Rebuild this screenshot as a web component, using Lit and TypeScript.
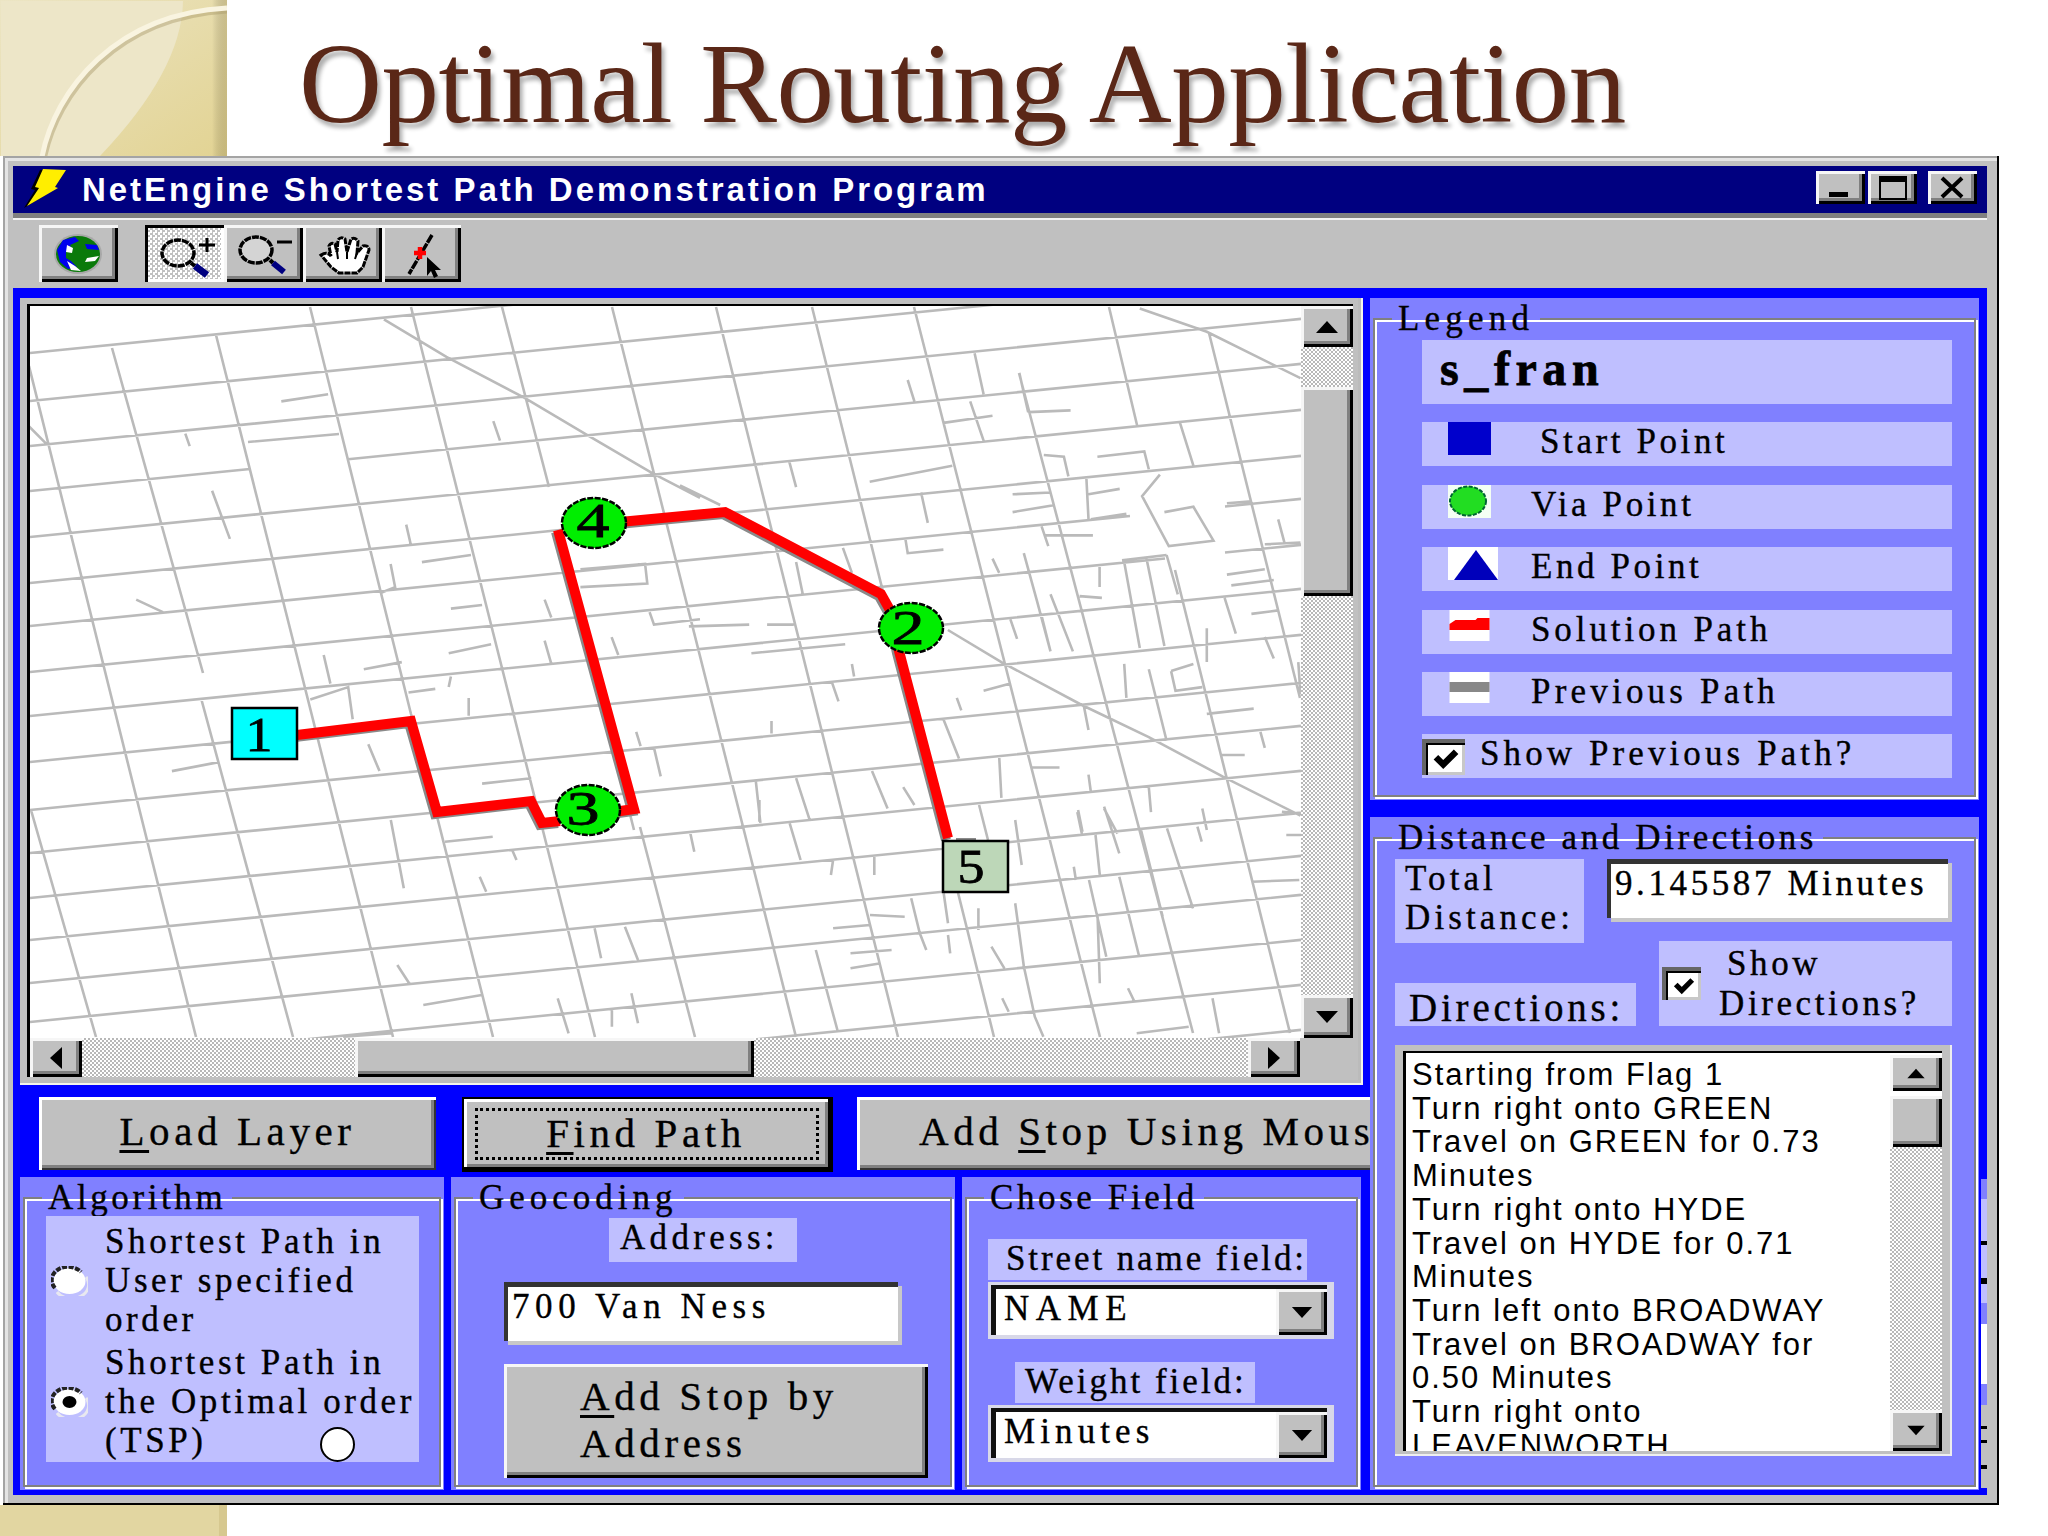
import { LitElement, html, css, svg } from "lit";
import { customElement } from "lit/decorators.js";

const z3 = (x: number, y: number) => [x / 2.24, 280 + y / 2.8];
const z4 = (x: number, y: number) => [680 + x / 2.24, 280 + y / 2.8];
const z9 = (x: number, y: number) => [20 + x / 2.306, 800 + y / 3];
const z10 = (x: number, y: number) => [690 + x / 2.306, 800 + y / 3];

const poly = (p: number[], f: (x: number, y: number) => number[]) => {
  let d = "";
  for (let i = 0; i < p.length; i += 2) {
    const [x, y] = f(p[i], p[i + 1]);
    d += `${i ? "L" : "M"}${x.toFixed(1)} ${y.toFixed(1)}`;
  }
  return d;
};

const MAIN_V = [
  [31, 810, 96, 1037], [29, 366, 196, 1037], [112, 348, 203, 673], [201, 698, 293, 1037],
  [216, 335, 393, 1037], [310, 307, 411, 714], [411, 714, 493, 1037], [411, 307, 595, 1037],
  [502, 307, 549, 487], [558, 530, 634, 830], [640, 827, 695, 1037], [612, 307, 796, 1037],
  [716, 307, 898, 1037], [812, 307, 994, 1037], [914, 307, 1100, 1037], [1019, 373, 1193, 1033],
  [1109, 307, 1137, 425], [1175, 570, 1290, 1033], [1209, 333, 1300, 698],
  [248, 442, 339, 434],
];
const H0 = [353, 401, 446, 491, 537, 583, 626, 672, 716, 762, 810, 853, 898, 940, 983, 1022, 1067, 1112, 1157];
const GAPS: Record<number, number[][]> = { 491: [[250, 348]], 626: [[1130, 1225]], 672: [[1165, 1225]] };

const EX3 = [
  [630, 340, 735, 320], [415, 430, 425, 465], [1105, 395, 1120, 450], [475, 590, 515, 725], [910, 685, 920, 740],
  [945, 790, 1055, 770], [875, 795, 885, 860, 855, 875], [305, 895, 365, 930], [1010, 920, 1080, 910],
  [1220, 895, 1235, 945], [1370, 1000, 1385, 1050], [1220, 1010, 1235, 1075], [725, 1050, 740, 1130],
  [815, 1090, 900, 1070], [1005, 1045, 1100, 1020], [1010, 1110, 1005, 1140], [695, 1175, 780, 1140, 790, 1230],
  [915, 1155, 975, 1145], [1050, 1170, 1050, 1220], [825, 1300, 850, 1375], [385, 1375, 490, 1350],
  [1080, 1410, 1190, 1395], [1465, 1310, 1480, 1390], [1425, 1265, 1435, 1305],
  [1300, 810, 1445, 795, 1450, 850, 1300, 860], [1455, 930, 1465, 965, 1568, 950],
  [860, 110, 1000, 215, 1175, 330, 1310, 430, 1460, 540, 1568, 610], [65, 410, 105, 460],
];
const EX4 = [
  [0, 575, 90, 630], [600, 980, 720, 1070, 900, 1190, 1050, 1280, 1215, 1390, 1390, 1500],
  [1030, 80, 1180, 145, 1390, 275],
  [510, 280, 525, 340], [650, 340, 680, 450], [590, 400, 700, 380], [660, 205, 680, 320], [760, 260, 780, 370],
  [780, 370, 875, 365], [245, 510, 260, 580], [425, 565, 610, 520], [540, 595, 555, 680], [745, 600, 830, 595],
  [745, 650, 840, 630], [815, 490, 860, 495, 870, 550], [910, 550, 915, 670], [915, 600, 985, 585], [920, 670, 1000, 655],
  [810, 690, 825, 745], [815, 715, 925, 715], [935, 495, 1040, 480, 1050, 530],
  [1075, 545, 1035, 605, 1095, 745, 1195, 730, 1150, 635, 1085, 650], [1120, 400, 1150, 520],
  [1225, 625, 1280, 620], [1340, 670, 1355, 740], [1310, 740, 1390, 735], [1225, 825, 1310, 810], [1235, 855, 1330, 840],
  [1280, 935, 1340, 925], [1220, 890, 1245, 990], [505, 725, 510, 765, 590, 755], [365, 750, 385, 820], [260, 790, 275, 880],
  [700, 780, 715, 820], [770, 765, 800, 900, 830, 1040], [830, 880, 880, 1040], [940, 800, 940, 860], [895, 885, 945, 890],
  [995, 790, 1030, 1030], [1045, 780, 1085, 1025], [1090, 770, 1115, 880], [990, 785, 1090, 770], [740, 950, 755, 1005],
  [810, 940, 830, 1040], [1180, 975, 1180, 1070], [995, 1075, 1000, 1170], [1050, 1090, 1090, 1290], [1100, 1095, 1110, 1150, 1170, 1140],
  [1100, 1095, 1150, 1075], [1310, 1000, 1330, 1060], [1385, 1070, 1390, 1160], [385, 1075, 390, 1110], [340, 1125, 355, 1180],
  [680, 1150, 740, 1130], [620, 1170, 630, 1205], [205, 1235, 205, 1270], [160, 1045, 370, 1020], [195, 965, 255, 965], [20, 970, 155, 965],
  [905, 1195, 915, 1260], [590, 1230, 625, 1340], [1180, 1215, 1285, 1200], [1300, 1265, 1310, 1310], [1210, 1330, 1265, 1330],
  [715, 1335, 720, 1450], [785, 1365, 850, 1365], [915, 1385, 920, 1430], [1050, 1420, 1055, 1490], [170, 1405, 180, 1520],
  [260, 1395, 290, 1510], [430, 1375, 465, 1480], [500, 1420, 525, 1470], [670, 1470, 690, 1568], [890, 1490, 900, 1550],
  [950, 1480, 980, 1550], [1170, 1480, 1180, 1540],
];
const EX9 = [
  [855, 60, 885, 265], [1135, 150, 1145, 180], [1060, 230, 1075, 275], [870, 495, 900, 555], [930, 615, 1065, 585],
  [1325, 385, 1340, 475], [1395, 380, 1425, 480], [1240, 595, 1265, 700], [1410, 580, 1425, 670], [1365, 630, 1365, 680],
  [1545, 95, 1555, 155], [980, 125, 1090, 110], [745, 710, 860, 700],
];
const EX10 = [
  [160, 0, 160, 65], [230, 70, 255, 180], [330, 180, 325, 225], [425, 165, 425, 225], [510, 295, 530, 400, 545, 450],
  [585, 280, 595, 370], [595, 405, 600, 460], [665, 325, 665, 390], [750, 310, 770, 500, 795, 650, 815, 710], [750, 60, 765, 195],
  [895, 30, 905, 95], [955, 20, 990, 160], [935, 105, 945, 225], [885, 200, 890, 240], [920, 240, 960, 470], [990, 230, 1035, 465],
  [940, 350, 945, 550], [1040, 90, 1090, 350], [1100, 85, 1160, 325], [1170, 80, 1180, 125], [330, 385, 415, 375], [415, 345, 495, 350],
  [370, 460, 465, 450], [370, 505, 440, 490], [290, 450, 340, 690], [695, 440, 725, 505], [1010, 565, 1025, 605], [720, 595, 735, 635],
  [1205, 595, 1220, 700], [1030, 700, 1150, 680], [1295, 245, 1405, 240], [1375, 105, 1410, 105], [1365, 35, 1410, 40],
];

function streets() {
  let d = "";
  for (const v of MAIN_V) d += `M${v[0]} ${v[1]}L${v[2]} ${v[3]}`;
  const at = (y0: number, x: number) => (y0 - 0.1 * (x - 30)).toFixed(1);
  for (const y0 of H0) {
    let start = 30;
    for (const g of GAPS[y0] ?? []) {
      d += `M${start} ${at(y0, start)}L${g[0]} ${at(y0, g[0])}`;
      start = g[1];
    }
    d += `M${start} ${at(y0, start)}L1301 ${at(y0, 1301)}`;
  }
  for (const p of EX3) d += poly(p, z3);
  for (const p of EX4) d += poly(p, z4);
  for (const p of EX9) d += poly(p, z9);
  for (const p of EX10) d += poly(p, z10);
  return d;
}
const STREETS = streets();
const ROUTE =
  "M297 735L411 721L437 812L531 801L542 823L560 821M600 814L634 809L558 530M620 522L725 512L881 594L890 610L899 651L948 838";

const DIRECTIONS = [
  "Starting from Flag 1", "Turn right onto GREEN", "Travel on GREEN for 0.73", "Minutes", "Turn right onto HYDE",
  "Travel on HYDE for 0.71", "Minutes", "Turn left onto BROADWAY", "Travel on BROADWAY for", "0.50 Minutes",
  "Turn right onto", "LEAVENWORTH",
];

const up = html`<svg class="arrow" viewBox="0 0 24 14"><polygon points="12,1 23,13 1,13"/></svg>`;
const down = html`<svg class="arrow" viewBox="0 0 24 14"><polygon points="12,13 23,1 1,1"/></svg>`;
const left = html`<svg class="arrow side" viewBox="0 0 14 24"><polygon points="1,12 13,1 13,23"/></svg>`;
const right = html`<svg class="arrow side" viewBox="0 0 14 24"><polygon points="13,12 1,1 1,23"/></svg>`;
const check = html`<svg class="tick" viewBox="0 0 30 24"><path d="M4 10L12 18L26 4" fill="none" stroke="#000" stroke-width="7"/></svg>`;

const radio = (on: boolean) => html`<svg class="radio" viewBox="0 0 37 30">
  <ellipse cx="18.5" cy="15" rx="16" ry="13" fill="#fff"/>
  <path d="M4 22A16 13 0 0 1 30 6" fill="none" stroke="#222" stroke-width="4" stroke-dasharray="5 1.5"/>
  <path d="M6 26A17 14 0 0 0 35 11" fill="none" stroke="#e8e8f0" stroke-width="3"/>
  ${on ? svg`<ellipse cx="18.5" cy="15" rx="7" ry="6"/>` : ""}
</svg>`;

const combo = (value: string, cls: string) => html`<div class="combo">
  <div class="combo-in">
    <span class="combo-text ${cls}">${value}</span>
    <div class="combo-btn bevel">${down}</div>
  </div>
</div>`;

@customElement("app-root")
export class AppRoot extends LitElement {
  static styles = css`
    :host { display: block; width: 2048px; height: 1536px; background: #fff; overflow: hidden; font-family: "Liberation Serif", serif; color: #000; }
    .head { display: flex; height: 156px; }
    .corner { width: 227px; height: 156px; display: block; flex: none; }
    h1 { margin: 0 0 0 72px; padding-top: 9px; height: 147px; font: 400 115px/150px "Liberation Serif", serif; letter-spacing: -0.55px; color: #5a2717; text-shadow: 3px 5px 4px rgba(0,0,0,.32); white-space: nowrap; }
    .foot { height: 31px; width: 227px; background: linear-gradient(to right, #e2d6a1 0 219px, #d6c88f 219px); }

    .window { margin-left: 3px; width: 1996px; height: 1349px; box-sizing: border-box; padding: 10px 10px 8px; border-right: 2px solid #000; border-bottom: 2px solid #000; background: #c0c0c0; box-shadow: inset 2px 2px 0 #a4a4a4, inset 5px 5px 0 #e4e4e4; display: flex; flex-direction: column; }
    .titlebar { height: 47px; flex: none; background: #000080; display: flex; align-items: center; padding-right: 10px; }
    .bolt { width: 60px; height: 47px; flex: none; }
    .title-text { margin-left: 9px; font: 700 33px/47px "Liberation Sans", sans-serif; letter-spacing: 2.95px; color: #fff; flex: 1; white-space: nowrap; }
    .winbtn { width: 49px; height: 33px; margin-top: -5px; display: flex; flex: none; }
    .winbtn svg { width: 100%; height: 100%; }
    .winbtn.m { margin-left: 3px; }
    .winbtn.c { margin-left: 11px; }
    .sep { height: 7px; flex: none; background: linear-gradient(to bottom, #808080 0 5px, #f4f4f4 5px); }
    .toolbar { height: 68px; flex: none; display: flex; padding: 5px 0 0 26px; box-sizing: border-box; }
    .tool { width: 79px; height: 57px; flex: none; box-sizing: border-box; }
    .tool svg { display: block; width: 79px; height: 57px; }
    .tool.first { margin-right: 27px; }
    .pressed { background: repeating-conic-gradient(#c0c0c0 0 25%, #fff 0 50%) 0 0/5px 5px; box-shadow: inset 3px 3px 0 #000, inset -3px -3px 0 #fff; }
    .bevel { background: #c0c0c0; box-shadow: inset 3px 3px 0 #f6f6f6, inset -3px -3px 0 #000, inset -6px -6px 0 #808080; }
    .bevel2 { background: #c0c0c0; box-shadow: inset 3px 3px 0 #fff, inset -2px -2px 0 #333, inset -5px -5px 0 #808080; }

    .main { flex: 1; min-height: 0; position: relative; background: #0000ff; padding: 10px 7px 5px; display: flex; }
    .col-l { width: 1350px; flex: none; overflow: hidden; display: flex; flex-direction: column; }
    .col-r { width: 609px; flex: none; display: flex; flex-direction: column; gap: 17px; }
    .strip { position: absolute; right: 0; top: 890px; width: 6px; height: 310px; background: linear-gradient(to bottom, #0000ff 0 1px, #8080ff 1px 21px, #bfbfff 21px 63px, #000 63px 67px, #bfbfff 67px 100px, #000 100px 106px, #bfbfff 106px 125px, #8080ff 125px 146px, #fff 146px 206px, #8080ff 206px 227px, #c0c0c0 227px 248px, #000 248px 251px, #c0c0c0 251px 262px, #000 262px 265px, #c0c0c0 265px 287px, #000 287px 291px, #c0c0c0 291px 310px); }

    .frame { width: 1343px; height: 787px; box-sizing: border-box; padding: 6px 10px 8px 7px; background: #c0c0c0; box-shadow: inset -2px -2px 0 #f4f4ec, inset -5px -5px 0 #bbb; flex: none; }
    .frame-in { box-sizing: border-box; width: 1326px; height: 773px; border-top: 2px solid #000; border-left: 3px solid #000; display: grid; grid-template-columns: 1271px 52px; grid-template-rows: 732px 39px; background: #c0c0c0; }
    .map { display: block; width: 1271px; height: 732px; background: #fff; }
    .street { fill: none; stroke: #bababa; stroke-width: 2.6; }
    .route { fill: none; stroke: #ff0000; stroke-width: 10; stroke-linejoin: miter; }
    .route-sh { fill: none; stroke: #8a8a8a; stroke-width: 10; stroke-linejoin: miter; }
    .digit { font: 400 49px "Liberation Serif", serif; fill: #000; text-anchor: middle; stroke: #000; stroke-width: .8; }
    .vs { display: flex; flex-direction: column; }
    .hs { display: flex; }
    .track { background: repeating-conic-gradient(#b8b8b8 0 25%, #fff 0 50%) 0 0/4px 4px; }
    .sbtn { display: flex; align-items: center; justify-content: center; flex: none; box-sizing: border-box; }
    .arrow { width: 24px; height: 14px; display: block; }
    .arrow.side { width: 14px; height: 24px; }
    .vs .b-up { height: 41px; } .vs .t1 { height: 40px; } .vs .thumb { height: 209px; } .vs .t2 { height: 399px; } .vs .b-dn { height: 43px; }
    .hs .b-l { width: 52px; } .hs .t1 { width: 273px; } .hs .thumb { width: 399px; } .hs .t2 { width: 494px; } .hs .b-r { width: 52px; }

    .btns { display: flex; flex: none; margin-top: 12px; height: 75px; padding-left: 19px; }
    .btn { flex: none; height: 73px; box-sizing: border-box; font: 400 41px/68px "Liberation Serif", serif; letter-spacing: 4.6px; -webkit-text-stroke: .35px #000; text-align: center; white-space: nowrap; }
    .btn u { text-underline-offset: 5px; text-decoration-thickness: 3px; }
    .b-load { width: 397px; }
    .b-find { width: 371px; height: 75px; margin-left: 26px; background: #c0c0c0; border-style: solid; border-color: #000; border-width: 2px 5px 5px 2px; box-shadow: inset 3px 3px 0 #fff, inset -3px -3px 0 #808080; position: relative; }
    .b-find::after { content: ""; position: absolute; inset: 9px 9px 7px 11px; border: 3px dotted #000; }
    .b-add { width: 602px; margin-left: 24px; }

    .bottom { display: flex; flex: none; margin-top: 5px; gap: 7px; }
    .panel { background: #8080ff; box-sizing: border-box; padding: 3px 3px 3px; display: flex; flex: none; }
    fieldset { margin: 0; padding: 0; flex: 1; min-width: 0; border: 2px solid #808080; box-shadow: inset 2px 2px 0 #fff, 2px 2px 0 #fff; display: flex; flex-direction: column; }
    legend { margin-left: 17px; padding: 0 6px; height: 36px; }
    .t { font: 400 35px/36px "Liberation Serif", serif; letter-spacing: 3.6px; -webkit-text-stroke: .35px #000; white-space: nowrap; }
    .row { background: #bfbfff; }
    legend.wide { letter-spacing: 5.2px; }
    legend.wider { letter-spacing: 5px; }

    .p-alg { width: 424px; height: 313px; }
    .p-geo { width: 504px; height: 313px; }
    .p-cho { width: 399px; height: 313px; }
    .alg-in { margin: 0 0 0 21px; width: 373px; height: 246px; box-sizing: border-box; padding: 6px 0 0 5px; position: relative; display: flex; flex-direction: column; gap: 4px; }
    .alg-opt { display: grid; grid-template-columns: 54px 1fr; align-items: center; line-height: 39px; }
    .radio { width: 37px; height: 30px; display: block; }
    .oval { position: absolute; left: 274px; top: 211px; width: 35px; height: 35px; box-sizing: border-box; border: 2px solid #000; border-radius: 50%; background: #fff; }
    .addr { margin: 2px 0 0 153px; width: 188px; height: 44px; box-sizing: border-box; padding-left: 11px; line-height: 40px; letter-spacing: 4.3px; }
    .input { box-sizing: border-box; background: #fff; border-top: 5px solid #333; border-left: 4px solid #333; box-shadow: 4px 4px 0 #c8c8c8; display: flex; align-items: flex-start; }
    .geo-in { margin: 20px 0 0 48px; width: 394px; height: 59px; padding-left: 4px; line-height: 40px; letter-spacing: 5.6px; }
    .geo-btn { margin: 23px 0 0 48px; width: 424px; height: 114px; box-sizing: border-box; padding: 9px 0 0 76px; font: 400 41px/47px "Liberation Serif", serif; letter-spacing: 4.6px; -webkit-text-stroke: .35px #000; white-space: nowrap; }
    .geo-btn u { text-underline-offset: 5px; text-decoration-thickness: 3px; }
    .lab { box-sizing: border-box; height: 41px; line-height: 40px; }
    .lab-s { margin: 23px 0 0 21px; width: 319px; padding-left: 18px; letter-spacing: 2.9px; }
    .lab-w { margin: 23px 0 0 48px; width: 240px; padding-left: 10px; letter-spacing: 3px; }
    .combo { margin: 2px 0 0 21px; width: 346px; height: 57px; box-sizing: border-box; padding: 3px 7px 4px 3px; background: #d8d8e8; flex: none; }
    .combo-in { height: 100%; box-sizing: border-box; border-top: 4px solid #111; border-left: 5px solid #111; background: #fff; display: flex; }
    .combo-text { flex: 1; font: 400 35px/40px "Liberation Serif", serif; letter-spacing: 3.6px; -webkit-text-stroke: .35px #000; padding-left: 8px; }
    .combo-text.n { letter-spacing: 6.5px; }
    .combo-text.mn { letter-spacing: 5.1px; }
    .combo-btn { width: 51px; display: flex; align-items: center; justify-content: center; flex: none; }
    .combo-btn .arrow { width: 22px; height: 13px; }

    .p-leg { height: 502px; width: 609px; }
    .p-dis { height: 673px; width: 609px; }
    .rows { margin-left: 47px; width: 530px; display: flex; flex-direction: column; gap: 18.4px; padding-top: 3px; }
    .lrow { height: 44px; display: flex; line-height: 40px; }
    .lrow.big { height: 64px; padding-left: 18px; font: 700 48px/58px "Liberation Serif", serif; letter-spacing: 5.6px; -webkit-text-stroke: .8px #000; }
    .ic { margin-left: 26px; width: 43px; height: 33px; flex: none; display: block; }
    .ic.w { width: 50px; }
    .lbl { margin-left: 40px; line-height: 40px; }
    .lrow .lbl.s { margin-left: 49px; }
    .lrow .lbl.e { margin-left: 33px; }
    .lrow .lbl.pv { margin-left: 40px; letter-spacing: 4.2px; }
    .lrow .lbl.so { letter-spacing: 3.9px; }
    .lrow .lbl.p { margin-left: 15px; letter-spacing: 4.1px; }
    .cb { width: 43px; height: 36px; box-sizing: border-box; flex: none; background: #fff; border-top: 4px solid #666; border-left: 4px solid #666; box-shadow: inset 2px 2px 0 #000, inset -3px -3px 0 #c8c8c8; display: flex; align-items: center; justify-content: center; margin-top: 5px; }
    .tick { width: 28px; height: 22px; display: block; }
    .dgrid { margin: 3px 0 0 20px; display: grid; width: 557px; grid-template-columns: 189px 23px 29px 23px 293px; grid-template-rows: 63px 19px 2px 40px 43px; }
    .total { grid-column: 1; grid-row: 1 / 4; padding: 0 0 0 10px; line-height: 39px; letter-spacing: 4.1px; }
    .dist { grid-column: 3 / 6; grid-row: 1; padding-left: 4px; line-height: 40px; margin-right: 4px; margin-bottom: 4px; }
    .show { grid-column: 5; grid-row: 3 / 6; display: flex; position: relative; }
    .show .cb { margin: 26px 0 0 3px; width: 39px; height: 33px; }
    .show .cb .tick { width: 24px; height: 18px; }
    .show-t { line-height: 40px; padding-top: 3px; margin-left: 18px; }
    .show-t span { padding-left: 8px; }
    .dirs { grid-column: 1 / 4; grid-row: 5; font: 400 39px/43px "Liberation Serif", serif; letter-spacing: 3.8px; padding: 3px 0 0 14px; box-sizing: border-box; white-space: nowrap; }
    .list { margin: 19px 0 0 20px; width: 557px; height: 411px; box-sizing: border-box; padding: 6px 10px 5px 8px; background: #c0c0c0; box-shadow: inset -2px -2px 0 #eee; flex: none; }
    .list-in { height: 100%; box-sizing: border-box; border-top: 2px solid #000; border-left: 3px solid #000; display: flex; background: #fff; }
    .list-text { flex: 1; min-width: 0; overflow: hidden; padding: 5px 0 0 6px; font: 400 31px/33.7px "Liberation Sans", sans-serif; letter-spacing: 2px; white-space: nowrap; }
    .list-sb { width: 52px; flex: none; display: flex; flex-direction: column; }
    .list-sb .b-up { height: 36px; margin-top: 2px; } .list-sb .gap { height: 5px; background: #fff; } .list-sb .thumb { height: 51px; } .list-sb .t2 { flex: 1; } .list-sb .b-dn { height: 41px; }
    .list-sb .arrow { width: 20px; height: 11px; }
  `;

  private mapSvg() {
    const oval = (cx: number, cy: number, d: string, dx: number, by: number) => svg`
      <ellipse cx=${cx} cy=${cy} rx="32" ry="25" fill="#00ee00" stroke="#000" stroke-width="2.5" stroke-dasharray="6 1.5"/>
      <text class="digit" x=${dx} y=${by} textLength="33" lengthAdjust="spacingAndGlyphs">${d}</text>`;
    return html`<svg class="map" viewBox="30 306 1271 732">
      <path class="street" d=${STREETS}/>
      <path class="route-sh" d=${ROUTE} transform="translate(-2 2)"/>
      <path class="route" d=${ROUTE}/>
      <rect x="232" y="708" width="65" height="51" fill="#00ffff" stroke="#000" stroke-width="2.5"/>
      <text class="digit" x="259" y="751" textLength="27" lengthAdjust="spacingAndGlyphs">1</text>
      ${oval(594, 523, "4", 593, 537)}
      ${oval(588, 810, "3", 583, 825)}
      ${oval(911, 628, "2", 908, 644)}
      <rect x="956" y="838" width="20" height="4" fill="#8a8a8a"/>
      <rect x="943" y="841" width="65" height="51" fill="#bdd7b8" stroke="#000" stroke-width="2.5"/>
      <text class="digit" x="971" y="883" textLength="27" lengthAdjust="spacingAndGlyphs">5</text>
    </svg>`;
  }

  render() {
    return html`
      <div class="head">
        <svg class="corner" viewBox="0 0 227 156">
          <defs>
            <linearGradient id="cg" x1="0" y1="0" x2="1" y2="1"><stop offset="0" stop-color="#ece5c4"/><stop offset="1" stop-color="#e2d393"/></linearGradient>
            <linearGradient id="ce" x1="0" x2="1"><stop offset="0" stop-color="#000" stop-opacity="0"/><stop offset="1" stop-color="#8a7a40" stop-opacity=".3"/></linearGradient>
          </defs>
          <rect width="227" height="156" fill="url(#cg)"/>
          <path d="M1 1H183Q182 70 100 156H1Z" fill="#ede6c8"/>
          <rect x="212" width="15" height="156" fill="url(#ce)"/>
          <path d="M42 157C55 90 115 14 227 8" fill="none" stroke="#a89a68" stroke-opacity=".45" stroke-width="5" transform="translate(2 3)"/>
          <path d="M42 157C55 90 115 14 227 8" fill="none" stroke="#f9f4e0" stroke-width="5"/>
        </svg>
        <h1>Optimal Routing Application</h1>
      </div>

      <div class="window">
        <div class="titlebar">
          <svg class="bolt" viewBox="0 0 60 47">
            <polygon points="29,3 53,4 41,21 44,22 13,41 24,23 20,22" fill="#000" transform="translate(-2 1)"/>
            <polygon points="30,3 53,4 42,21 45,22 14,40 26,22 22,21" fill="#ffee00"/>
          </svg>
          <div class="title-text">NetEngine Shortest Path Demonstration Program</div>
          <div class="winbtn bevel"><svg viewBox="0 0 49 33"><rect x="13" y="21" width="19" height="5"/></svg></div>
          <div class="winbtn m bevel"><svg viewBox="0 0 49 33"><rect x="12" y="6" width="26" height="22" fill="none" stroke="#000" stroke-width="2"/><rect x="12" y="6" width="26" height="5"/></svg></div>
          <div class="winbtn c bevel"><svg viewBox="0 0 49 33"><path d="M14 7L34 26M34 7L14 26" stroke="#000" stroke-width="4"/></svg></div>
        </div>
        <div class="sep"></div>
        <div class="toolbar">
          <div class="tool first bevel">
            <svg viewBox="0 0 79 57">
              <ellipse cx="39" cy="29" rx="24" ry="20" fill="#a8a8a8"/>
              <ellipse cx="39" cy="29" rx="22" ry="18" fill="#0a7a0a"/>
              <path d="M18 25L24 15L36 12L40 16L31 20L33 24L27 26L27 33L32 36L38 42L29 44L21 37Z" fill="#0000ee"/>
              <path d="M28 20L34 23L33 28L27 27ZM48 33L60 31L56 36L46 37ZM28 36L36 41L42 46L32 45Z" fill="#fff"/>
              <path d="M46 19L58 20L60 25L48 24Z" fill="#0000ee"/>
            </svg>
          </div>
          <div class="tool pressed">
            <svg viewBox="0 0 79 57">
              <ellipse cx="33" cy="28" rx="16" ry="13" fill="none" stroke="#000" stroke-width="3.5" stroke-dasharray="7 1"/>
              <path d="M46 38L50 41" stroke="#000" stroke-width="4"/><path d="M50 41L62 50" stroke="#000080" stroke-width="7"/>
              <path d="M54 20H70M62 13V27" stroke="#000" stroke-width="3"/>
            </svg>
          </div>
          <div class="tool bevel">
            <svg viewBox="0 0 79 57">
              <ellipse cx="32" cy="25" rx="16" ry="13" fill="#d4d4d4" stroke="#000" stroke-width="3.5" stroke-dasharray="7 1"/>
              <path d="M46 35L49 38" stroke="#000" stroke-width="4"/><path d="M49 38L60 47" stroke="#000080" stroke-width="6"/>
              <path d="M53 17H68" stroke="#000" stroke-width="3"/>
            </svg>
          </div>
          <div class="tool bevel">
            <svg viewBox="0 0 79 57">
              <path d="M18 30Q24 26 28 31L26 21Q28 17 32 19L34 27L35 15Q38 11 42 14L44 27L48 14Q52 12 55 16L54 28L60 21Q66 20 66 25L60 42L54 48L36 48L28 42Z" fill="#fff" stroke="#000" stroke-width="3" stroke-dasharray="6 1"/>
              <path d="M34 27L35 34M44 27L44 34M54 28L52 34" stroke="#000" stroke-width="2"/>
            </svg>
          </div>
          <div class="tool bevel">
            <svg viewBox="0 0 79 57">
              <path d="M50 10L27 49" stroke="#000" stroke-width="3.5" stroke-dasharray="9 1"/>
              <path d="M32 28H44M38 22V34" stroke="#ff0000" stroke-width="4.5"/>
              <polygon points="45,32 45,51 49,46 52,53 56,51 53,45 59,45" fill="#000"/>
            </svg>
          </div>
        </div>

        <div class="main">
          <div class="col-l">
            <div class="frame">
              <div class="frame-in">
                ${this.mapSvg()}
                <div class="vs">
                  <div class="sbtn bevel b-up">${up}</div>
                  <div class="track t1"></div>
                  <div class="bevel thumb"></div>
                  <div class="track t2"></div>
                  <div class="sbtn bevel b-dn">${down}</div>
                </div>
                <div class="hs">
                  <div class="sbtn bevel b-l">${left}</div>
                  <div class="track t1"></div>
                  <div class="bevel thumb"></div>
                  <div class="track t2"></div>
                  <div class="sbtn bevel b-r">${right}</div>
                </div>
                <div></div>
              </div>
            </div>

            <div class="btns">
              <div class="btn b-load bevel2"><u>L</u>oad Layer</div>
              <div class="btn b-find"><u>F</u>ind Path</div>
              <div class="btn b-add bevel2">Add <u>S</u>top Using Mouse</div>
            </div>

            <div class="bottom">
              <div class="panel p-alg">
                <fieldset>
                  <legend class="t">Algorithm</legend>
                  <div class="alg-in row t">
                    <div class="alg-opt">${radio(false)}<div>Shortest Path in<br />User specified<br />order</div></div>
                    <div class="alg-opt">${radio(true)}<div>Shortest Path in<br />the Optimal order<br />(TSP)</div></div>
                    <div class="oval"></div>
                  </div>
                </fieldset>
              </div>
              <div class="panel p-geo">
                <fieldset>
                  <legend class="t wider">Geocoding</legend>
                  <div class="addr row t">Address:</div>
                  <div class="input geo-in t">700 Van Ness</div>
                  <div class="geo-btn bevel"><u>A</u>dd Stop by<br />Address</div>
                </fieldset>
              </div>
              <div class="panel p-cho">
                <fieldset>
                  <legend class="t">Chose Field</legend>
                  <div class="lab lab-s row t">Street name field:</div>
                  ${combo("NAME", "n")}
                  <div class="lab lab-w row t">Weight field:</div>
                  ${combo("Minutes", "mn")}
                </fieldset>
              </div>
            </div>
          </div>

          <div class="col-r">
            <div class="panel p-leg">
              <fieldset>
                <legend class="t wide">Legend</legend>
                <div class="rows t">
                  <div class="lrow big row">s_fran</div>
                  <div class="lrow row">
                    <svg class="ic" viewBox="0 0 43 33"><rect width="43" height="33" fill="#0000cc"/></svg>
                    <span class="lbl s">Start Point</span>
                  </div>
                  <div class="lrow row">
                    <svg class="ic" viewBox="0 0 43 33"><rect width="43" height="33" fill="#f4fff4"/><ellipse cx="20" cy="16" rx="18" ry="14.5" fill="#22dd22" stroke="#063" stroke-width="2" stroke-dasharray="4 1.5"/></svg>
                    <span class="lbl">Via Point</span>
                  </div>
                  <div class="lrow row">
                    <svg class="ic w" viewBox="0 0 50 33"><rect width="50" height="33" fill="#fff"/><polygon points="6,33 28,3 50,33" fill="#0000bb"/></svg>
                    <span class="lbl e">End Point</span>
                  </div>
                  <div class="lrow row">
                    <svg class="ic" viewBox="0 0 40 33"><rect width="40" height="31" fill="#fff"/><path d="M0 14L6 10H26L28 8H40V20H0Z" fill="#ff0000"/></svg>
                    <span class="lbl so">Solution Path</span>
                  </div>
                  <div class="lrow row">
                    <svg class="ic" viewBox="0 0 40 33"><rect width="40" height="31" fill="#fff"/><rect y="10" width="40" height="10" fill="#888"/></svg>
                    <span class="lbl pv">Previous Path</span>
                  </div>
                  <div class="lrow row">
                    <div class="cb">${check}</div>
                    <span class="lbl p">Show Previous Path?</span>
                  </div>
                </div>
              </fieldset>
            </div>

            <div class="panel p-dis">
              <fieldset>
                <legend class="t">Distance and Directions</legend>
                <div class="dgrid t">
                  <div class="total row">Total<br />Distance:</div>
                  <div class="input dist">9.145587 Minutes</div>
                  <div class="show row">
                    <div class="cb">${check}</div>
                    <div class="show-t"><span>Show</span><br />Directions?</div>
                  </div>
                  <div class="dirs row">Directions:</div>
                </div>
                <div class="list">
                  <div class="list-in">
                    <div class="list-text">${DIRECTIONS.map((l) => html`<div>${l}</div>`)}</div>
                    <div class="list-sb">
                      <div class="sbtn bevel b-up">${up}</div>
                      <div class="gap"></div>
                      <div class="bevel thumb"></div>
                      <div class="track t2"></div>
                      <div class="sbtn bevel b-dn">${down}</div>
                    </div>
                  </div>
                </div>
              </fieldset>
            </div>
          </div>
          <div class="strip"></div>
        </div>
      </div>
      <div class="foot"></div>
    `;
  }
}
